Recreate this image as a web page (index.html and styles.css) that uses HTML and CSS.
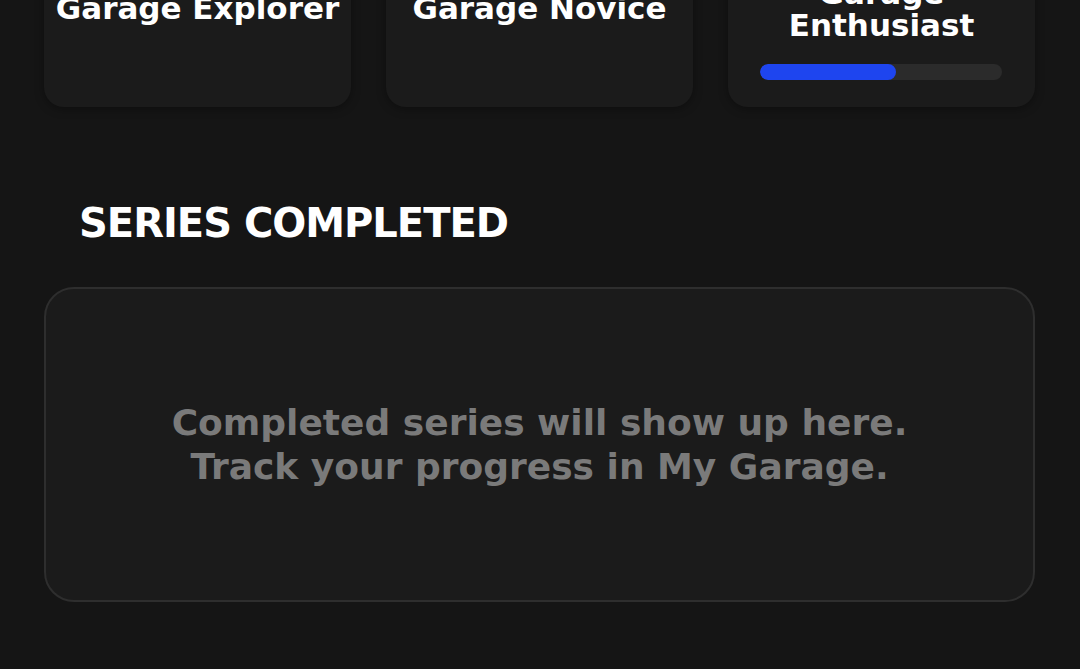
FILE: index.html
```html
<!DOCTYPE html>
<html lang="en">
<head>
    <meta charset="UTF-8">
    <meta name="viewport" content="width=device-width, initial-scale=1.0">
    <title>Achievements</title>
    <link rel="stylesheet" href="styles.css">
</head>
<body>
    <div class="page">
        <div class="level-row">
            <div class="level-card">
                <div class="level-title">Garage Explorer</div>
            </div>
            <div class="level-card">
                <div class="level-title">Garage Novice</div>
            </div>
            <div class="level-card level-card--current">
                <div class="level-title">Garage<br>Enthusiast</div>
                <div class="level-bar">
                    <div class="level-bar-fill" style="width: 56%"></div>
                </div>
            </div>
        </div>

        <h2 class="section-title">SERIES COMPLETED</h2>

        <div class="empty-box">
            <p class="empty-text">Completed series will show up here.<br>Track your progress in My Garage.</p>
        </div>
    </div>
</body>
</html>
```

FILE: styles.css
```css
html, body {
    margin: 0;
    padding: 0;
    background: #151515;
}
body {
    font-family: "DejaVu Sans", Inter, sans-serif;
    color: #fff;
    height: 669px;
    overflow: hidden;
}
.page {
    padding: 0 45px 0 44px;
}
.level-row {
    display: grid;
    grid-template-columns: repeat(3, 1fr);
    gap: 35px;
    margin-top: -60px;
}
.level-card {
    background: #1b1b1b;
    border-radius: 20px;
    box-shadow: 0 2px 10px rgba(0, 0, 0, 0.35);
    padding: 52px 8px 27px;
    text-align: center;
}
.level-card--current {
    padding-top: 37px;
}
.level-title {
    font-size: 31px;
    line-height: 32px;
    font-weight: 700;
    white-space: nowrap;
}
.level-bar {
    margin: 23px 25px 0 24px;
    height: 16px;
    border-radius: 8px;
    background: #2b2b2b;
    overflow: hidden;
}
.level-bar-fill {
    height: 100%;
    border-radius: 8px;
    background: #1e45ef;
}
.section-title {
    margin: 91px 0 0 35px;
    font-size: 40px;
    line-height: 50px;
    font-weight: 700;
    letter-spacing: -1px;
}
.empty-box {
    margin-top: 39px;
    height: 311px;
    border: 2px solid #2e2e2e;
    border-radius: 30px;
    background: #1b1b1b;
    display: flex;
    align-items: center;
    justify-content: center;
}
.empty-text {
    margin: 1px 0 0;
    font-size: 36px;
    line-height: 44px;
    font-weight: 700;
    color: #7a7a7a;
    text-align: center;
}
```
